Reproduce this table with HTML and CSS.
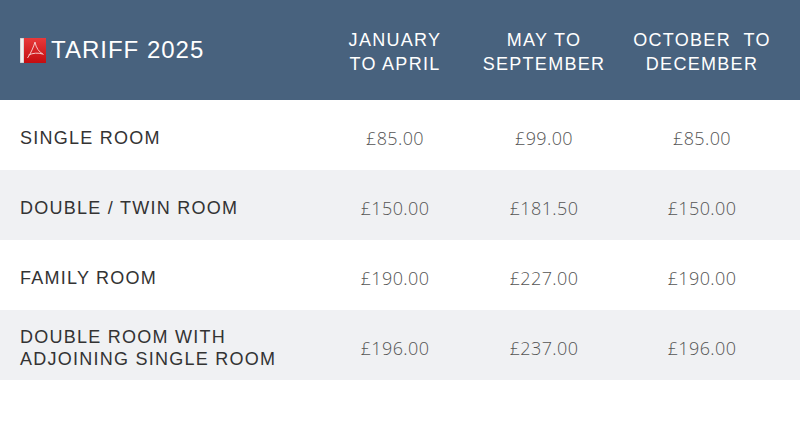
FILE: index.html
```html
<!DOCTYPE html>
<html>
<head>
<meta charset="utf-8">
<link rel="stylesheet" href="styles.css">
</head>
<body>
<div class="tariff">
  <div class="row head">
    <div class="title">
      <svg class="pdf" width="26" height="25" viewBox="0 0 26 25">
        <defs>
          <linearGradient id="rg" x1="0" y1="0" x2="0" y2="1">
            <stop offset="0" stop-color="#e8393a"/>
            <stop offset="1" stop-color="#c40d10"/>
          </linearGradient>
        </defs>
        <rect x="0" y="0" width="26" height="25" fill="#bdbdbd"/>
        <rect x="0.5" y="0.5" width="3" height="24" fill="#f1f1f1"/>
        <rect x="4" y="0" width="22" height="25" fill="url(#rg)"/>
        <path d="M15 4 C 13.5 9, 11 15, 7.5 20 M15 4 C 16 10, 19 14, 23.5 16.5 M8.5 17 C 13 15, 18 14.5, 22.5 16" fill="none" stroke="#f6c8c8" stroke-width="1"/>
      </svg>
      <span>TARIFF 2025</span>
    </div>
    <div class="col">JANUARY<br>TO APRIL</div>
    <div class="col">MAY TO<br>SEPTEMBER</div>
    <div class="col">OCTOBER &nbsp;TO<br>DECEMBER</div>
  </div>
  <div class="row">
    <div class="label">SINGLE ROOM</div>
    <div class="price">£85.00</div>
    <div class="price">£99.00</div>
    <div class="price">£85.00</div>
  </div>
  <div class="row alt">
    <div class="label">DOUBLE / TWIN ROOM</div>
    <div class="price">£150.00</div>
    <div class="price">£181.50</div>
    <div class="price">£150.00</div>
  </div>
  <div class="row">
    <div class="label">FAMILY ROOM</div>
    <div class="price">£190.00</div>
    <div class="price">£227.00</div>
    <div class="price">£190.00</div>
  </div>
  <div class="row alt">
    <div class="label">DOUBLE ROOM WITH<br>ADJOINING SINGLE ROOM</div>
    <div class="price">£196.00</div>
    <div class="price">£237.00</div>
    <div class="price">£196.00</div>
  </div>
</div>
</body>
</html>
```
FILE: styles.css
```css
html, body {
  margin: 0;
  padding: 0;
  background: #ffffff;
}
.tariff {
  width: 800px;
}
.row {
  display: grid;
  grid-template-columns: 320px 150px 148px 168px 1fr;
  align-items: center;
  box-sizing: border-box;
  height: 70px;
  padding-top: 6px;
  background: #ffffff;
}
.row.alt {
  background: #f0f1f3;
}
.row.head {
  height: 100px;
  padding-top: 0;
  background: #48627e;
  color: #ffffff;
}
.title {
  display: flex;
  align-items: center;
  padding-left: 20px;
  font-family: "Liberation Sans", Arial, sans-serif;
  font-size: 24px;
  letter-spacing: 1px;
}
.title .pdf {
  display: block;
  margin-right: 5px;
  margin-top: 1px;
}
.col {
  font-family: "Liberation Sans", Arial, sans-serif;
  font-size: 18px;
  line-height: 24px;
  letter-spacing: 1.3px;
  text-align: center;
  white-space: nowrap;
  margin-top: 4px;
}
.label {
  padding-left: 20px;
  font-family: "Liberation Sans", Arial, sans-serif;
  font-size: 18px;
  line-height: 22px;
  letter-spacing: 1.25px;
  color: #333333;
}
.price {
  font-family: "Open Sans", sans-serif;
  font-weight: 300;
  font-size: 18px;
  letter-spacing: 0.4px;
  color: #555555;
  text-align: center;
}
```
